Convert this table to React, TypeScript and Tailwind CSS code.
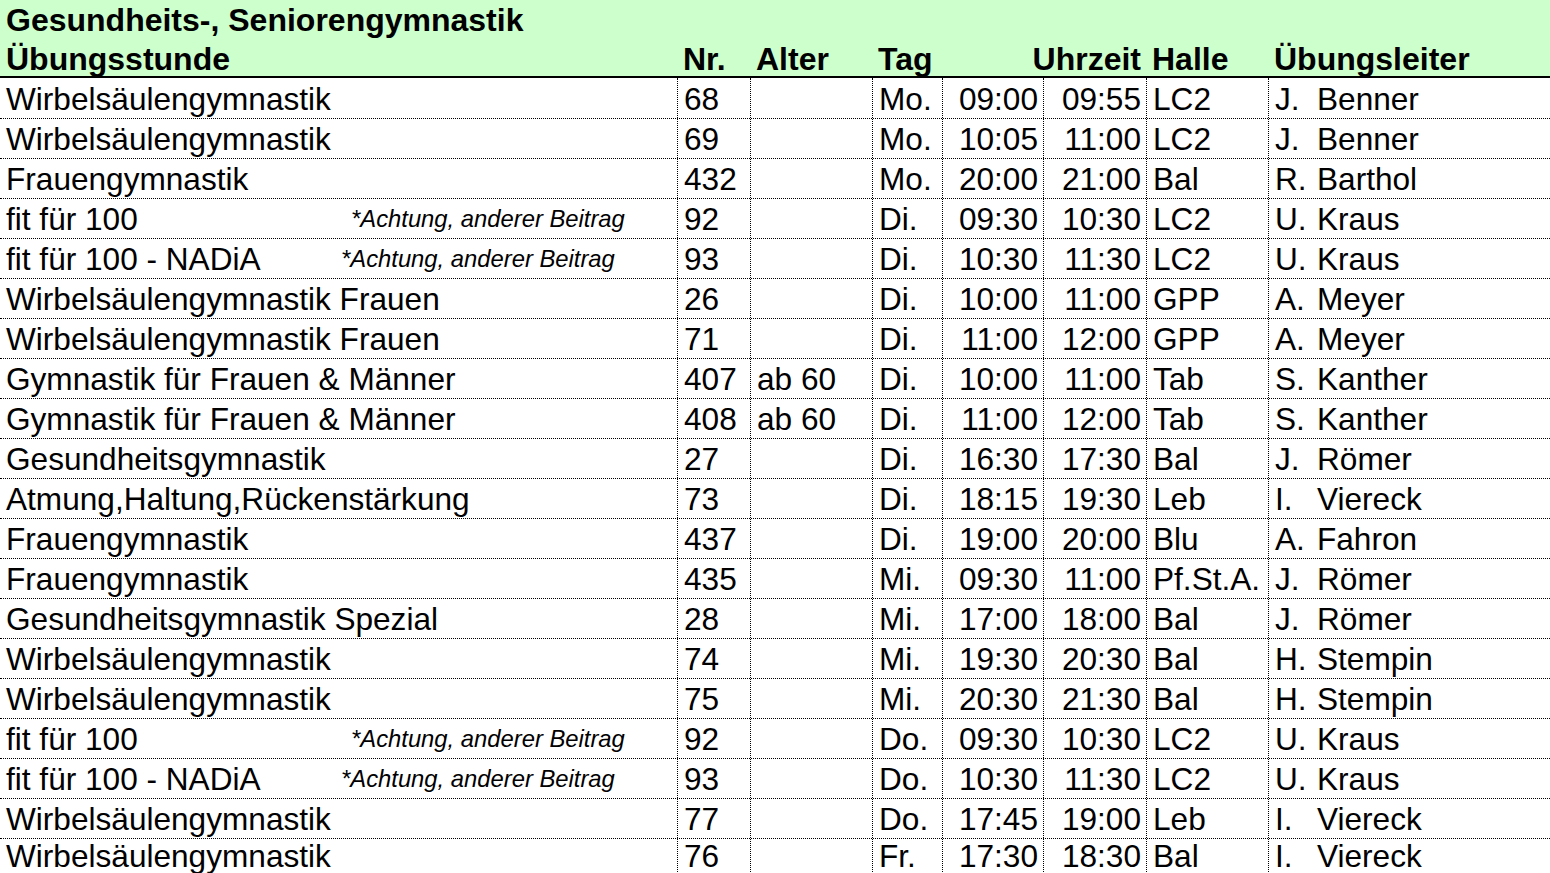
import React from 'react';

interface Course {
  name: string;
  note?: string;
  noteOffset?: string;
  nr: string;
  age: string;
  day: string;
  from: string;
  to: string;
  hall: string;
  initial: string;
  leader: string;
}

const NOTE = '*Achtung, anderer Beitrag';

const courses: Course[] = [
  { name: 'Wirbelsäulengymnastik', nr: '68', age: '', day: 'Mo.', from: '09:00', to: '09:55', hall: 'LC2', initial: 'J.', leader: 'Benner' },
  { name: 'Wirbelsäulengymnastik', nr: '69', age: '', day: 'Mo.', from: '10:05', to: '11:00', hall: 'LC2', initial: 'J.', leader: 'Benner' },
  { name: 'Frauengymnastik', nr: '432', age: '', day: 'Mo.', from: '20:00', to: '21:00', hall: 'Bal', initial: 'R.', leader: 'Barthol' },
  { name: 'fit für 100', note: NOTE, noteOffset: 'w-[345px]', nr: '92', age: '', day: 'Di.', from: '09:30', to: '10:30', hall: 'LC2', initial: 'U.', leader: 'Kraus' },
  { name: 'fit für 100 - NADiA', note: NOTE, noteOffset: 'w-[335px]', nr: '93', age: '', day: 'Di.', from: '10:30', to: '11:30', hall: 'LC2', initial: 'U.', leader: 'Kraus' },
  { name: 'Wirbelsäulengymnastik Frauen', nr: '26', age: '', day: 'Di.', from: '10:00', to: '11:00', hall: 'GPP', initial: 'A.', leader: 'Meyer' },
  { name: 'Wirbelsäulengymnastik Frauen', nr: '71', age: '', day: 'Di.', from: '11:00', to: '12:00', hall: 'GPP', initial: 'A.', leader: 'Meyer' },
  { name: 'Gymnastik für Frauen & Männer', nr: '407', age: 'ab 60', day: 'Di.', from: '10:00', to: '11:00', hall: 'Tab', initial: 'S.', leader: 'Kanther' },
  { name: 'Gymnastik für Frauen & Männer', nr: '408', age: 'ab 60', day: 'Di.', from: '11:00', to: '12:00', hall: 'Tab', initial: 'S.', leader: 'Kanther' },
  { name: 'Gesundheitsgymnastik', nr: '27', age: '', day: 'Di.', from: '16:30', to: '17:30', hall: 'Bal', initial: 'J.', leader: 'Römer' },
  { name: 'Atmung,Haltung,Rückenstärkung', nr: '73', age: '', day: 'Di.', from: '18:15', to: '19:30', hall: 'Leb', initial: 'I.', leader: 'Viereck' },
  { name: 'Frauengymnastik', nr: '437', age: '', day: 'Di.', from: '19:00', to: '20:00', hall: 'Blu', initial: 'A.', leader: 'Fahron' },
  { name: 'Frauengymnastik', nr: '435', age: '', day: 'Mi.', from: '09:30', to: '11:00', hall: 'Pf.St.A.', initial: 'J.', leader: 'Römer' },
  { name: 'Gesundheitsgymnastik Spezial', nr: '28', age: '', day: 'Mi.', from: '17:00', to: '18:00', hall: 'Bal', initial: 'J.', leader: 'Römer' },
  { name: 'Wirbelsäulengymnastik', nr: '74', age: '', day: 'Mi.', from: '19:30', to: '20:30', hall: 'Bal', initial: 'H.', leader: 'Stempin' },
  { name: 'Wirbelsäulengymnastik', nr: '75', age: '', day: 'Mi.', from: '20:30', to: '21:30', hall: 'Bal', initial: 'H.', leader: 'Stempin' },
  { name: 'fit für 100', note: NOTE, noteOffset: 'w-[345px]', nr: '92', age: '', day: 'Do.', from: '09:30', to: '10:30', hall: 'LC2', initial: 'U.', leader: 'Kraus' },
  { name: 'fit für 100 - NADiA', note: NOTE, noteOffset: 'w-[335px]', nr: '93', age: '', day: 'Do.', from: '10:30', to: '11:30', hall: 'LC2', initial: 'U.', leader: 'Kraus' },
  { name: 'Wirbelsäulengymnastik', nr: '77', age: '', day: 'Do.', from: '17:45', to: '19:00', hall: 'Leb', initial: 'I.', leader: 'Viereck' },
  { name: 'Wirbelsäulengymnastik', nr: '76', age: '', day: 'Fr.', from: '17:30', to: '18:30', hall: 'Bal', initial: 'I.', leader: 'Viereck' },
];

const cols = 'grid grid-cols-[677px_73px_122px_70px_101px_103px_122px_1fr]';
const cell = 'border-l border-dotted border-black pl-[6px] whitespace-nowrap overflow-hidden';

const App: React.FC = () => {
  const last = courses.length - 1;

  return (
    <div
      className="h-[873px] w-[1550px] overflow-hidden bg-white text-black"
      style={{ fontFamily: '"Liberation Sans", Arial, sans-serif' }}
    >
      <div className="bg-[#ccffcc] font-bold text-[32px]">
        <div className="h-[40px] leading-[40px] pl-[6px] whitespace-nowrap">
          Gesundheits-, Seniorengymnastik
        </div>
        <div className={`${cols} h-[38px] leading-[38px] border-b-2 border-black`}>
          <div className="pl-[6px]">Übungsstunde</div>
          <div className="pl-[6px]">Nr.</div>
          <div className="pl-[6px]">Alter</div>
          <div className="pl-[6px]">Tag</div>
          <div className="col-span-2 text-right pr-[5px]">Uhrzeit</div>
          <div className="pl-[6px]">Halle</div>
          <div className="pl-[6px]">Übungsleiter</div>
        </div>
      </div>

      <div className="text-[31.6px]">
        {courses.map((c, i) => {
          const size =
            i === 0
              ? 'h-[41px] leading-[42px] border-b'
              : i === last
                ? 'h-[35px] leading-[34px]'
                : 'h-[40px] leading-[40px] border-b';
          return (
            <div key={i} className={`${cols} ${size} border-dotted border-black`}>
              <div className="pl-[6px] whitespace-nowrap overflow-hidden">
                {c.note ? (
                  <>
                    <span className={`inline-block ${c.noteOffset}`}>{c.name}</span>
                    <span className="italic text-[23.8px] align-[3px]">{c.note}</span>
                  </>
                ) : (
                  c.name
                )}
              </div>
              <div className={cell}>{c.nr}</div>
              <div className={cell}>{c.age}</div>
              <div className={cell}>{c.day}</div>
              <div className={`${cell} text-right pr-[5px]`}>{c.from}</div>
              <div className={`${cell} text-right pr-[5px]`}>{c.to}</div>
              <div className={cell}>{c.hall}</div>
              <div className={cell}>
                <span className="inline-block w-[42px]">{c.initial}</span>
                {c.leader}
              </div>
            </div>
          );
        })}
      </div>
    </div>
  );
};

export default App;
